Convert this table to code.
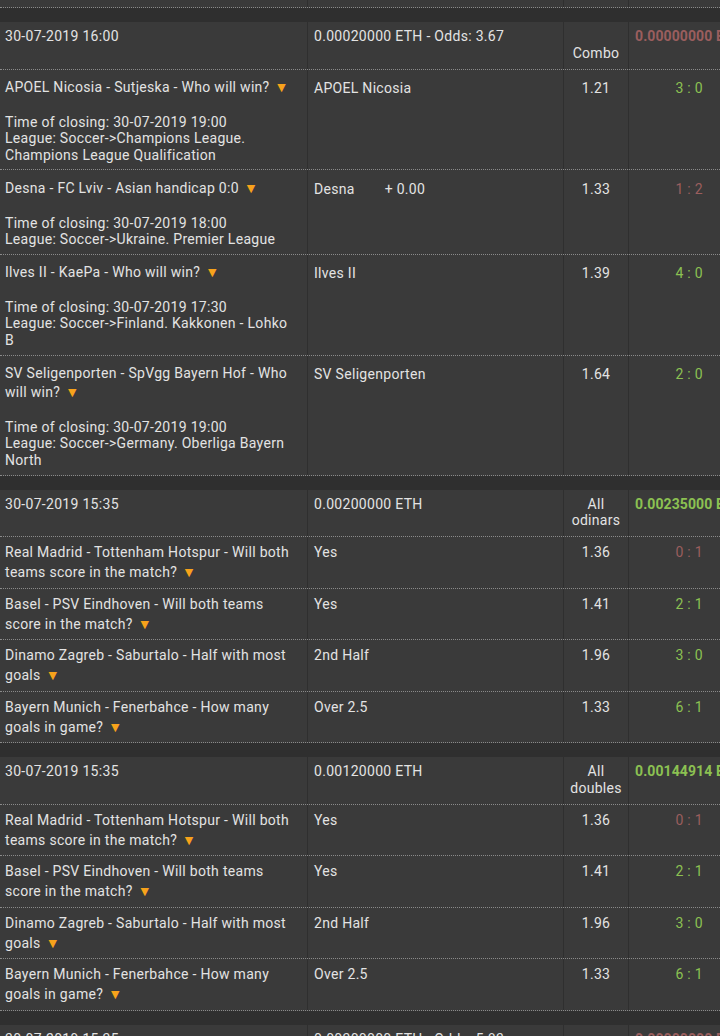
import React from 'react';

type Leg = {
    title: string;
    closing?: string;
    league?: string;
    pick: string;
    handicap?: string;
    odds: string;
    score: string;
    won: boolean;
};

type Bet = {
    date: string;
    stake: string;
    type: string[];
    payout: string;
    won: boolean;
    legs: Leg[];
};

const bets: Bet[] = [
    {
        date: '30-07-2019 16:00',
        stake: '0.00020000 ETH - Odds: 3.67',
        type: ['', 'Combo'],
        payout: '0.00000000 ETH',
        won: false,
        legs: [
            { title: 'APOEL Nicosia - Sutjeska - Who will win?', closing: '30-07-2019 19:00', league: 'Soccer->Champions League. Champions League Qualification', pick: 'APOEL Nicosia', odds: '1.21', score: '3 : 0', won: true },
            { title: 'Desna - FC Lviv - Asian handicap 0:0', closing: '30-07-2019 18:00', league: 'Soccer->Ukraine. Premier League', pick: 'Desna', handicap: '+ 0.00', odds: '1.33', score: '1 : 2', won: false },
            { title: 'Ilves II - KaePa - Who will win?', closing: '30-07-2019 17:30', league: 'Soccer->Finland. Kakkonen - Lohko B', pick: 'Ilves II', odds: '1.39', score: '4 : 0', won: true },
            { title: 'SV Seligenporten - SpVgg Bayern Hof - Who will win?', closing: '30-07-2019 19:00', league: 'Soccer->Germany. Oberliga Bayern North', pick: 'SV Seligenporten', odds: '1.64', score: '2 : 0', won: true },
        ],
    },
    {
        date: '30-07-2019 15:35',
        stake: '0.00200000 ETH',
        type: ['All', 'odinars'],
        payout: '0.00235000 ETH',
        won: true,
        legs: [
            { title: 'Real Madrid - Tottenham Hotspur - Will both teams score in the match?', pick: 'Yes', odds: '1.36', score: '0 : 1', won: false },
            { title: 'Basel - PSV Eindhoven - Will both teams score in the match?', pick: 'Yes', odds: '1.41', score: '2 : 1', won: true },
            { title: 'Dinamo Zagreb - Saburtalo - Half with most goals', pick: '2nd Half', odds: '1.96', score: '3 : 0', won: true },
            { title: 'Bayern Munich - Fenerbahce - How many goals in game?', pick: 'Over 2.5', odds: '1.33', score: '6 : 1', won: true },
        ],
    },
    {
        date: '30-07-2019 15:35',
        stake: '0.00120000 ETH',
        type: ['All', 'doubles'],
        payout: '0.00144914 ETH',
        won: true,
        legs: [
            { title: 'Real Madrid - Tottenham Hotspur - Will both teams score in the match?', pick: 'Yes', odds: '1.36', score: '0 : 1', won: false },
            { title: 'Basel - PSV Eindhoven - Will both teams score in the match?', pick: 'Yes', odds: '1.41', score: '2 : 1', won: true },
            { title: 'Dinamo Zagreb - Saburtalo - Half with most goals', pick: '2nd Half', odds: '1.96', score: '3 : 0', won: true },
            { title: 'Bayern Munich - Fenerbahce - How many goals in game?', pick: 'Over 2.5', odds: '1.33', score: '6 : 1', won: true },
        ],
    },
    {
        date: '30-07-2019 15:35',
        stake: '0.00300000 ETH - Odds: 5.83',
        type: ['', 'Combo'],
        payout: '0.00000000 ETH',
        won: false,
        legs: [],
    },
];

const rowGrid = 'grid grid-cols-[308px_256px_65px_1fr] bg-[#3a3a3a] border-b border-dotted border-[#8a8a8a]';
const sep = 'border-r border-[#2f2f2f]';

const Arrow = () => (
    <span className="ml-[4px] text-[11px] text-[#f7a21b] font-['DejaVu_Sans',sans-serif] align-[1px]">▼</span>
);

const LegRow: React.FC<{ leg: Leg }> = ({ leg }) => {
    const detailed = !!leg.closing;
    const pad = detailed ? 'pt-[8.5px] pb-[6px]' : 'pt-[5px] pb-[4.5px]';
    return (
        <div className={rowGrid}>
            <div className={`${sep} ${pad} pl-[5px] pr-[10px]`}>
                <div className={detailed ? 'leading-[19px]' : 'leading-5'}>
                    {leg.title} <Arrow />
                </div>
                {detailed && (
                    <div className="mt-[16.6px] leading-[16.6px]">
                        <div>Time of closing: {leg.closing}</div>
                        <div>League: {leg.league}</div>
                    </div>
                )}
            </div>
            <div className={`${sep} ${pad} pl-[6px] leading-5`}>
                {leg.pick}
                {leg.handicap && <span className="ml-[30px]">{leg.handicap}</span>}
            </div>
            <div className={`${sep} ${pad} text-center leading-5`}>{leg.odds}</div>
            <div className={`${pad} text-right pr-[17px] leading-5 ${leg.won ? 'text-[#8cc152]' : 'text-[#9a5e5e]'}`}>
                {leg.score}
            </div>
        </div>
    );
};

const BetBlock: React.FC<{ bet: Bet }> = ({ bet }) => (
    <div>
        <div className="h-[14px] bg-[#2f2f2f]" />
        <div className={`${rowGrid} leading-[16.8px]`}>
            <div className={`${sep} pt-[6px] pb-[7px] pl-[5px]`}>{bet.date}</div>
            <div className={`${sep} pt-[6px] pb-[7px] pl-[6px] whitespace-nowrap`}>{bet.stake}</div>
            <div className={`${sep} pt-[6px] pb-[7px] text-center`}>
                <div>{bet.type[0] || '\u00a0'}</div>
                <div>{bet.type[1]}</div>
            </div>
            <div
                className={`pt-[6px] pl-[6px] whitespace-nowrap overflow-hidden font-bold tracking-[0.1px] ${bet.won ? 'text-[#8cc152]' : 'text-[#9a5e5e]'}`}
            >
                {bet.payout}
            </div>
        </div>
        {bet.legs.map((leg, i) => (
            <LegRow key={i} leg={leg} />
        ))}
    </div>
);

export default function App() {
    return (
        <div className="w-[720px] h-[1036px] overflow-hidden bg-[#2f2f2f] text-[14px] tracking-[0.3px] text-[#e3e3e3] font-['Roboto',sans-serif]">
            <div className={`${rowGrid} h-[8px]`}>
                <div className={sep} />
                <div className={sep} />
                <div className={sep} />
                <div />
            </div>
            {bets.map((bet, i) => (
                <BetBlock key={i} bet={bet} />
            ))}
        </div>
    );
}
